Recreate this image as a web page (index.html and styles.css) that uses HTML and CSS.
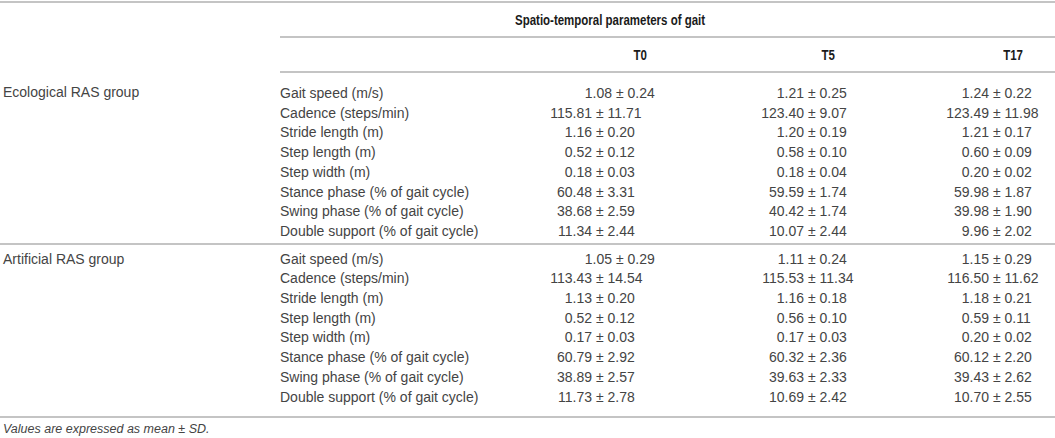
FILE: index.html
```html
<!DOCTYPE html>
<html lang="en">
<head>
  <meta charset="UTF-8">
  <title>Spatio-temporal parameters of gait</title>
  <link rel="stylesheet" href="styles.css">
</head>
<body>

<div class="wrap">
<table class="gait">
  <colgroup>
    <col class="c-group">
    <col class="c-param">
    <col class="c-t0">
    <col class="c-val">
    <col class="c-val">
  </colgroup>
  <thead>
    <tr class="head-top">
      <th rowspan="2"></th>
      <th colspan="4" class="span-title"><span class="cond">Spatio-temporal parameters of gait</span></th>
    </tr>
    <tr class="head-sub">
      <th></th>
      <th><span class="cond">T0</span></th>
      <th><span class="cond">T5</span></th>
      <th><span class="cond">T17</span></th>
    </tr>
  </thead>

  <tbody class="group first">
    <tr>
      <td class="label" rowspan="8">Ecological RAS group</td>
      <td>Gait speed (m/s)</td>
      <td><span class="m">1.08</span> ± 0.24</td>
      <td><span class="m">1.21</span> ± 0.25</td>
      <td><span class="m">1.24</span> ± 0.22</td>
    </tr>
    <tr>
      <td>Cadence (steps/min)</td>
      <td><span class="m">115.81</span> ± 11.71</td>
      <td><span class="m">123.40</span> ± 9.07</td>
      <td><span class="m">123.49</span> ± 11.98</td>
    </tr>
    <tr>
      <td>Stride length (m)</td>
      <td><span class="m">1.16</span> ± 0.20</td>
      <td><span class="m">1.20</span> ± 0.19</td>
      <td><span class="m">1.21</span> ± 0.17</td>
    </tr>
    <tr>
      <td>Step length (m)</td>
      <td><span class="m">0.52</span> ± 0.12</td>
      <td><span class="m">0.58</span> ± 0.10</td>
      <td><span class="m">0.60</span> ± 0.09</td>
    </tr>
    <tr>
      <td>Step width (m)</td>
      <td><span class="m">0.18</span> ± 0.03</td>
      <td><span class="m">0.18</span> ± 0.04</td>
      <td><span class="m">0.20</span> ± 0.02</td>
    </tr>
    <tr>
      <td>Stance phase (% of gait cycle)</td>
      <td><span class="m">60.48</span> ± 3.31</td>
      <td><span class="m">59.59</span> ± 1.74</td>
      <td><span class="m">59.98</span> ± 1.87</td>
    </tr>
    <tr>
      <td>Swing phase (% of gait cycle)</td>
      <td><span class="m">38.68</span> ± 2.59</td>
      <td><span class="m">40.42</span> ± 1.74</td>
      <td><span class="m">39.98</span> ± 1.90</td>
    </tr>
    <tr>
      <td>Double support (% of gait cycle)</td>
      <td><span class="m">11.34</span> ± 2.44</td>
      <td><span class="m">10.07</span> ± 2.44</td>
      <td><span class="m">9.96</span> ± 2.02</td>
    </tr>
  </tbody>

  <tbody class="group second">
    <tr>
      <td class="label" rowspan="8">Artificial RAS group</td>
      <td>Gait speed (m/s)</td>
      <td><span class="m">1.05</span> ± 0.29</td>
      <td><span class="m">1.11</span> ± 0.24</td>
      <td><span class="m">1.15</span> ± 0.29</td>
    </tr>
    <tr>
      <td>Cadence (steps/min)</td>
      <td><span class="m">113.43</span> ± 14.54</td>
      <td><span class="m">115.53</span> ± 11.34</td>
      <td><span class="m">116.50</span> ± 11.62</td>
    </tr>
    <tr>
      <td>Stride length (m)</td>
      <td><span class="m">1.13</span> ± 0.20</td>
      <td><span class="m">1.16</span> ± 0.18</td>
      <td><span class="m">1.18</span> ± 0.21</td>
    </tr>
    <tr>
      <td>Step length (m)</td>
      <td><span class="m">0.52</span> ± 0.12</td>
      <td><span class="m">0.56</span> ± 0.10</td>
      <td><span class="m">0.59</span> ± 0.11</td>
    </tr>
    <tr>
      <td>Step width (m)</td>
      <td><span class="m">0.17</span> ± 0.03</td>
      <td><span class="m">0.17</span> ± 0.03</td>
      <td><span class="m">0.20</span> ± 0.02</td>
    </tr>
    <tr>
      <td>Stance phase (% of gait cycle)</td>
      <td><span class="m">60.79</span> ± 2.92</td>
      <td><span class="m">60.32</span> ± 2.36</td>
      <td><span class="m">60.12</span> ± 2.20</td>
    </tr>
    <tr>
      <td>Swing phase (% of gait cycle)</td>
      <td><span class="m">38.89</span> ± 2.57</td>
      <td><span class="m">39.63</span> ± 2.33</td>
      <td><span class="m">39.43</span> ± 2.62</td>
    </tr>
    <tr>
      <td>Double support (% of gait cycle)</td>
      <td><span class="m">11.73</span> ± 2.78</td>
      <td><span class="m">10.69</span> ± 2.42</td>
      <td><span class="m">10.70</span> ± 2.55</td>
    </tr>
  </tbody>
</table>
</div>

<p class="note">Values are expressed as mean ± SD.</p>

</body>
</html>
```

FILE: styles.css
```css
body {
  margin: 0;
  font-family: "Liberation Sans", Arial, sans-serif;
  font-size: 14px;
  color: #444;
  background: #fff;
  overflow: hidden;
}
.wrap {
  width: 1055px;
  overflow: hidden;
  padding-top: 1px;
}
.gait {
  width: 1106px;
  table-layout: fixed;
  border-collapse: collapse;
  border-top: 2px solid #c4c4c4;
  border-bottom: 2px solid #c4c4c4;
}
.c-group { width: 280px; }
.c-param { width: 264px; }
.c-t0 { width: 192px; }
.c-val { width: 185px; }

.gait th {
  height: 33px;
  padding: 0;
  font-weight: bold;
  color: #1a1a1a;
  text-align: center;
  vertical-align: middle;
}
.cond {
  display: inline-block;
  transform: scaleX(0.82);
}
.gait th.span-title {
  text-align: left;
  padding-left: 235px;
  border-bottom: 2px solid #c4c4c4;
}
.span-title .cond {
  transform-origin: left center;
}
.head-sub th {
  border-bottom: 2px solid #c4c4c4;
}

.gait td {
  padding: 0;
  line-height: 19.7px;
  vertical-align: top;
  white-space: nowrap;
}
.gait td + td + td {
  padding-left: 20px;
}
.gait td.label {
  padding-left: 3px;
}
.m {
  display: inline-block;
  width: 48px;
  text-align: right;
}

.group.first tr:first-child td { padding-top: 11px; }
.group.first tr:last-child td { padding-bottom: 1px; }
.group.second tr:first-child td { padding-top: 5px; }
.group.second tr:last-child td { padding-bottom: 9px; }
.group.first tr:last-child td,
.group.first td.label {
  border-bottom: 2px solid #c4c4c4;
}

.note {
  margin: 4px 0 0 3px;
  font-size: 12.5px;
  font-style: italic;
  color: #444;
}
```
